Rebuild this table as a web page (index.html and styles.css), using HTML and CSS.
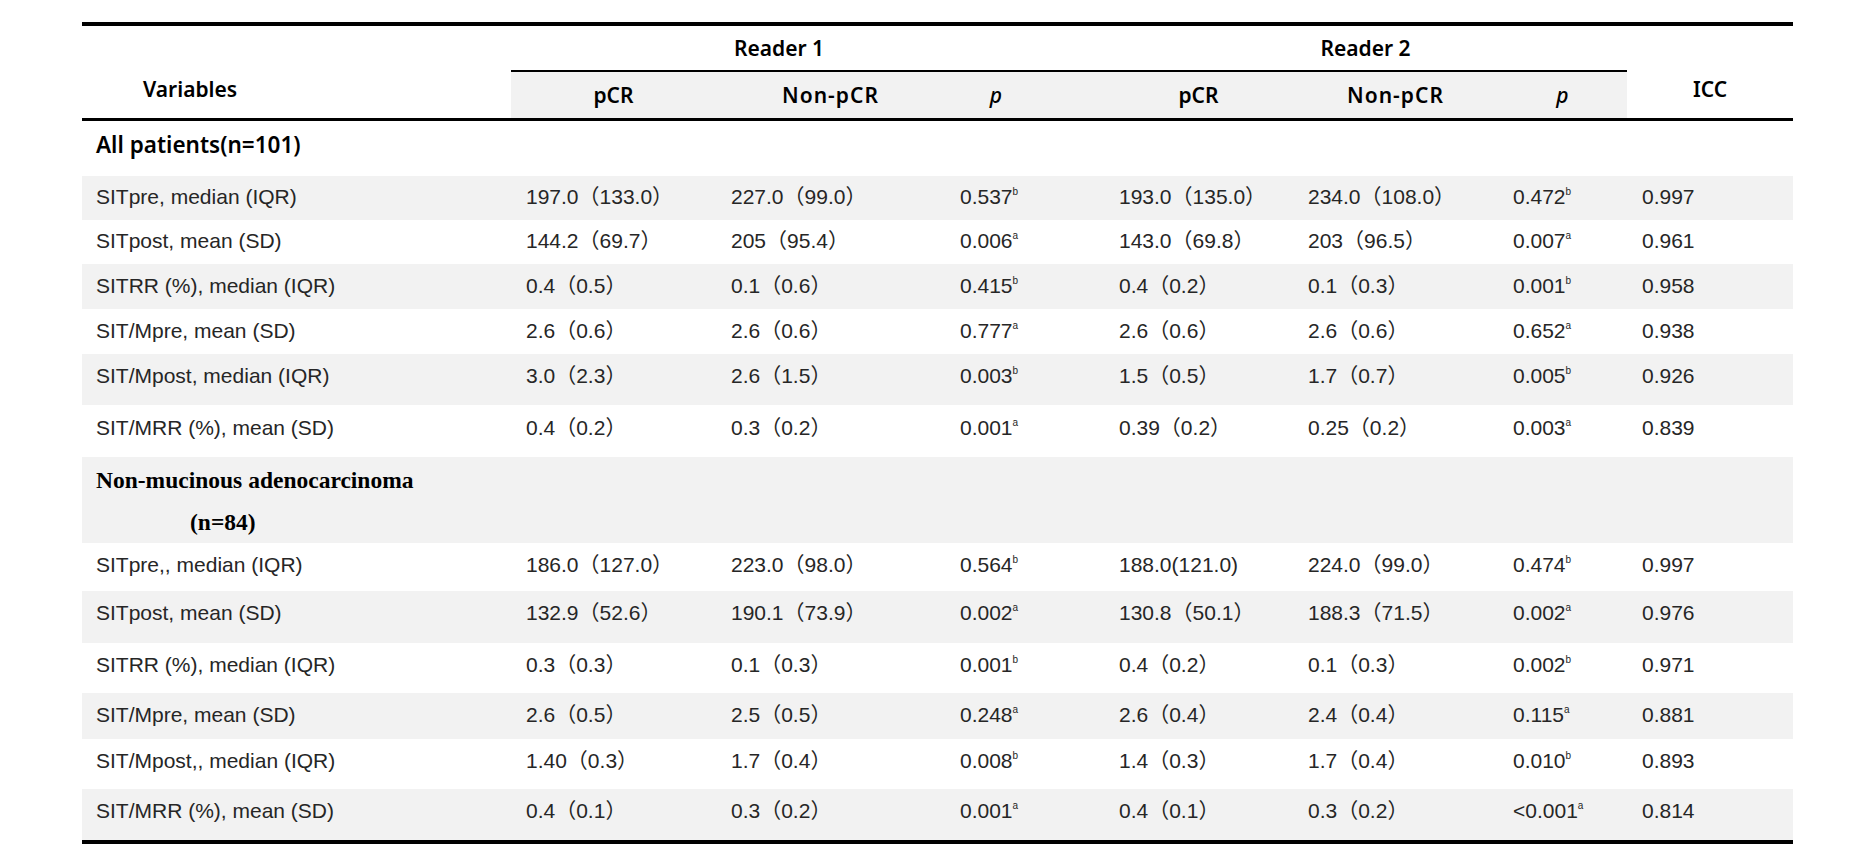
FILE: index.html
```html
<!DOCTYPE html>
<html lang="en">
<head>
<meta charset="utf-8">
<title>Reader agreement table</title>
<link rel="stylesheet" href="styles.css">
</head>
<body>
<table class="tbl">
  <colgroup>
    <col class="c-var"><col class="c-pcr1"><col class="c-non1"><col class="c-p1"><col class="c-gap">
    <col class="c-pcr2"><col class="c-non2"><col class="c-p2"><col class="c-icc">
  </colgroup>
  <thead>
    <tr class="h1">
      <th class="var" rowspan="2">Variables</th>
      <th class="grp" colspan="3">Reader 1</th>
      <th class="grp"></th>
      <th class="grp" colspan="3">Reader 2</th>
      <th class="icc" rowspan="2">ICC</th>
    </tr>
    <tr class="h2">
      <th>pCR</th>
      <th class="np">Non-pCR</th>
      <th><i>p</i></th>
      <th></th>
      <th>pCR</th>
      <th class="np">Non-pCR</th>
      <th><i>p</i></th>
    </tr>
  </thead>
  <tbody>
    <tr class="sec">
      <td colspan="9">All patients(n=101)</td>
    </tr>
    <tr class="alt r44">
      <td class="lbl">SITpre, median (IQR)</td>
      <td>197.0（133.0）</td><td>227.0（99.0）</td><td colspan="2">0.537<sup class="s">b</sup></td>
      <td>193.0（135.0）</td><td>234.0（108.0）</td><td>0.472<sup class="s">b</sup></td><td>0.997</td>
    </tr>
    <tr class="r44">
      <td class="lbl">SITpost, mean (SD)</td>
      <td>144.2（69.7）</td><td>205（95.4）</td><td colspan="2">0.006<sup class="s">a</sup></td>
      <td>143.0（69.8）</td><td>203（96.5）</td><td>0.007<sup class="s">a</sup></td><td>0.961</td>
    </tr>
    <tr class="alt r45">
      <td class="lbl">SITRR (%), median (IQR)</td>
      <td>0.4（0.5）</td><td>0.1（0.6）</td><td colspan="2">0.415<sup class="s">b</sup></td>
      <td>0.4（0.2）</td><td>0.1（0.3）</td><td>0.001<sup class="s">b</sup></td><td>0.958</td>
    </tr>
    <tr class="r45">
      <td class="lbl">SIT/Mpre, mean (SD)</td>
      <td>2.6（0.6）</td><td>2.6（0.6）</td><td colspan="2">0.777<sup class="s">a</sup></td>
      <td>2.6（0.6）</td><td>2.6（0.6）</td><td>0.652<sup class="s">a</sup></td><td>0.938</td>
    </tr>
    <tr class="alt r51">
      <td class="lbl">SIT/Mpost, median (IQR)</td>
      <td>3.0（2.3）</td><td>2.6（1.5）</td><td colspan="2">0.003<sup class="s">b</sup></td>
      <td>1.5（0.5）</td><td>1.7（0.7）</td><td>0.005<sup class="s">b</sup></td><td>0.926</td>
    </tr>
    <tr class="r52">
      <td class="lbl">SIT/MRR (%), mean (SD)</td>
      <td>0.4（0.2）</td><td>0.3（0.2）</td><td colspan="2">0.001<sup class="s">a</sup></td>
      <td>0.39（0.2）</td><td>0.25（0.2）</td><td>0.003<sup class="s">a</sup></td><td>0.839</td>
    </tr>
    <tr class="alt sec2">
      <td colspan="9">Non-mucinous adenocarcinoma<span class="sub">(n=84)</span></td>
    </tr>
    <tr class="q48">
      <td class="lbl">SITpre,, median (IQR)</td>
      <td>186.0（127.0）</td><td>223.0（98.0）</td><td colspan="2">0.564<sup class="s">b</sup></td>
      <td>188.0(121.0)</td><td>224.0（99.0）</td><td>0.474<sup class="s">b</sup></td><td>0.997</td>
    </tr>
    <tr class="alt q52">
      <td class="lbl">SITpost, mean (SD)</td>
      <td>132.9（52.6）</td><td>190.1（73.9）</td><td colspan="2">0.002<sup class="s">a</sup></td>
      <td>130.8（50.1）</td><td>188.3（71.5）</td><td>0.002<sup class="s">a</sup></td><td>0.976</td>
    </tr>
    <tr class="q50">
      <td class="lbl">SITRR (%), median (IQR)</td>
      <td>0.3（0.3）</td><td>0.1（0.3）</td><td colspan="2">0.001<sup class="s">b</sup></td>
      <td>0.4（0.2）</td><td>0.1（0.3）</td><td>0.002<sup class="s">b</sup></td><td>0.971</td>
    </tr>
    <tr class="alt q46">
      <td class="lbl">SIT/Mpre, mean (SD)</td>
      <td>2.6（0.5）</td><td>2.5（0.5）</td><td colspan="2">0.248<sup class="s">a</sup></td>
      <td>2.6（0.4）</td><td>2.4（0.4）</td><td>0.115<sup class="s">a</sup></td><td>0.881</td>
    </tr>
    <tr class="q50">
      <td class="lbl">SIT/Mpost,, median (IQR)</td>
      <td>1.40（0.3）</td><td>1.7（0.4）</td><td colspan="2">0.008<sup class="s">b</sup></td>
      <td>1.4（0.3）</td><td>1.7（0.4）</td><td>0.010<sup class="s">b</sup></td><td>0.893</td>
    </tr>
    <tr class="alt q51 last">
      <td class="lbl">SIT/MRR (%), mean (SD)</td>
      <td>0.4（0.1）</td><td>0.3（0.2）</td><td colspan="2">0.001<sup class="s">a</sup></td>
      <td>0.4（0.1）</td><td>0.3（0.2）</td><td>&lt;0.001<sup class="s">a</sup></td><td>0.814</td>
    </tr>
  </tbody>
</table>
</body>
</html>
```

FILE: styles.css
```css
html, body {
  margin: 0;
  padding: 0;
  background: #ffffff;
}

body {
  font-family: "Liberation Sans", Arial, "Noto Sans CJK SC", sans-serif;
  color: #262626;
}

.tbl {
  border-collapse: separate;
  border-spacing: 0;
  table-layout: fixed;
  width: 1711px;
  margin: 22px 0 0 82px;
}

.c-var  { width: 429px; }
.c-pcr1 { width: 205px; }
.c-non1 { width: 229px; }
.c-p1   { width: 102px; }
.c-gap  { width: 57px; }
.c-pcr2 { width: 189px; }
.c-non2 { width: 205px; }
.c-p2   { width: 129px; }
.c-icc  { width: 166px; }

/* ---------- header ---------- */
th {
  font-family: "Noto Sans", "Noto Sans CJK SC", sans-serif;
  font-weight: 600;
  font-size: 21px;
  color: #000;
  padding: 0;
  text-align: center;
  white-space: nowrap;
}

th i {
  font-style: italic;
  font-weight: 500;
}

.h1 th {
  border-top: 4px solid #000;
  line-height: 44px;
}

.h1 .grp {
  border-bottom: 2px solid #000;
}

.h1 .var,
.h1 .icc {
  border-bottom: 3px solid #000;
  padding-top: 34px;
  vertical-align: middle;
  line-height: 30px;
}

.h1 .var {
  text-align: left;
  padding-left: 61px;
}

.h2 th {
  background: #f2f2f2;
  line-height: 46px;
  border-bottom: 3px solid #000;
}

.np {
  letter-spacing: 1px;
}

/* ---------- body ---------- */
td {
  font-size: 21px;
  line-height: 28px;
  padding: 7px 15px 9px 15px;
  white-space: nowrap;
  vertical-align: top;
}

td.lbl {
  padding-left: 14px;
}

.alt td {
  background: #f2f2f2;
}

.s {
  font-size: 10px;
  line-height: 0;
  vertical-align: 9px;
}

.sec td {
  font-family: "Noto Sans", "Noto Sans CJK SC", sans-serif;
  font-weight: 600;
  font-size: 22.5px;
  color: #000;
  line-height: 30px;
  padding: 9px 14px 16px 14px;
}

.sec2 td {
  font-family: "Liberation Serif", "Times New Roman", serif;
  font-weight: 700;
  font-size: 23.5px;
  color: #000;
  line-height: 42px;
  padding: 2px 14px 0 14px;
}

.sub {
  display: block;
  padding-left: 94px;
}

/* first section row heights */
.r44 td { padding-top: 7px; padding-bottom: 9px; }
.r45 td { padding-top: 8px; padding-bottom: 9px; }
.r51 td { padding-top: 8px; padding-bottom: 15px; }
.r52 td { padding-top: 9px; padding-bottom: 15px; }

/* second section row heights */
.q46 td { padding-top: 8px; padding-bottom: 10px; }
.q48 td { padding-top: 8px; padding-bottom: 12px; }
.q50 td { padding-top: 8px; padding-bottom: 14px; }
.q51 td { padding-top: 8px; padding-bottom: 15px; }
.q52 td { padding-top: 8px; padding-bottom: 16px; }

.last td {
  border-bottom: 4px solid #000;
}
```
